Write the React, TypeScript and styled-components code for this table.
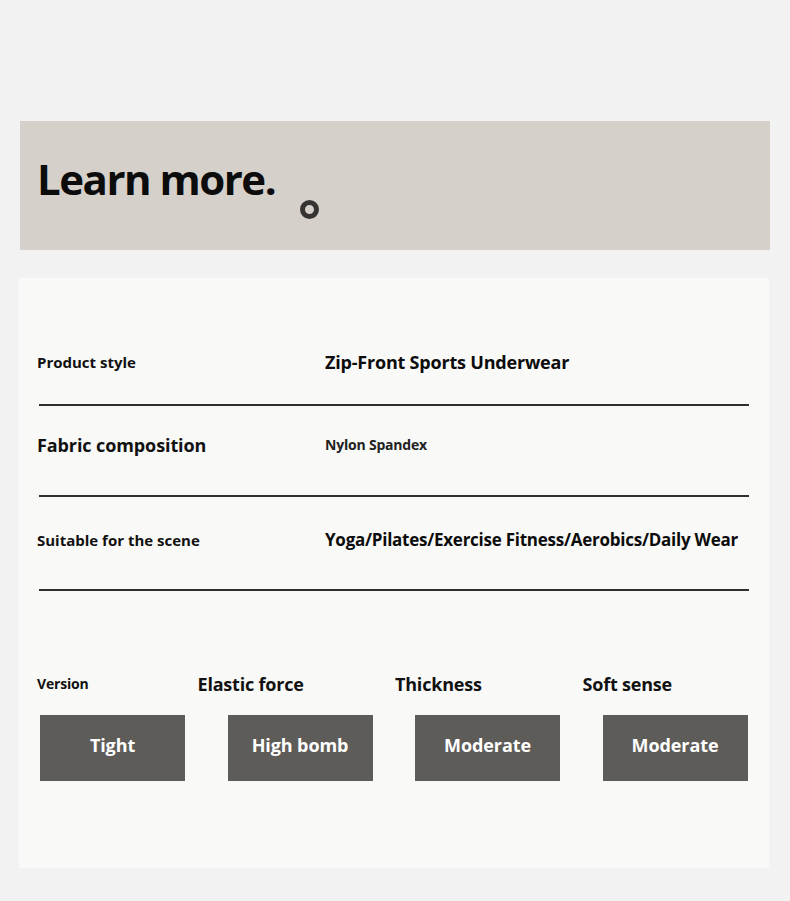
import styled, { createGlobalStyle } from "styled-components";

const GlobalStyle = createGlobalStyle`
  html, body {
    margin: 0;
    padding: 0;
    background: #f2f2f2;
  }
  body {
    font-family: "Open Sans", "Liberation Sans", sans-serif;
    color: #111;
  }
`;

const Page = styled.div`
  width: 790px;
  height: 901px;
  padding-top: 121px;
  box-sizing: border-box;
  overflow: hidden;
`;

const Banner = styled.section`
  margin-left: 20px;
  width: 750px;
  height: 129px;
  background: #d6d0cb;
  display: flex;
  align-items: flex-start;
  box-sizing: border-box;
  padding: 31px 0 0 17px;
`;

const Title = styled.h1`
  margin: 0;
  font-size: 42px;
  line-height: 54px;
  font-weight: 700;
  color: #0c0c0c;
  letter-spacing: -1.5px;
`;

const Ring = styled.span`
  display: block;
  width: 19px;
  height: 19px;
  box-sizing: border-box;
  border: 5px solid #363432;
  border-radius: 50%;
  margin: 48px 0 0 25px;
`;

const Card = styled.section`
  margin: 28px 0 0 19px;
  width: 750px;
  height: 590px;
  background: #f9f9f7;
  box-sizing: border-box;
  padding: 72px 20px 0;
`;

const Row = styled.div<{ $top: number; $bottom: number }>`
  display: grid;
  grid-template-columns: 286px 1fr;
  align-items: center;
  padding: ${(p) => p.$top}px 0 ${(p) => p.$bottom}px;
  border-bottom: 2px solid #2f2f2f;
`;

const Label = styled.div<{ $size: number; $spacing?: number }>`
  font-size: ${(p) => p.$size}px;
  line-height: 24px;
  font-weight: 700;
  margin-left: -2px;
  letter-spacing: ${(p) => p.$spacing ?? 0}px;
  white-space: nowrap;
`;

const Value = styled.div<{ $size: number; $spacing?: number; $soft?: boolean }>`
  font-size: ${(p) => p.$size}px;
  line-height: 24px;
  font-weight: 700;
  color: ${(p) => (p.$soft ? "#222" : "#0c0c0c")};
  letter-spacing: ${(p) => p.$spacing ?? -0.2}px;
  white-space: nowrap;
`;

const Specs = styled.div`
  display: grid;
  grid-template-columns: repeat(4, 145px);
  column-gap: 42.5px;
  row-gap: 19px;
  margin: 81px 0 0 1px;
`;

const SpecLabel = styled.div<{ $shift: number; $size: number }>`
  margin-left: ${(p) => p.$shift}px;
  font-size: ${(p) => p.$size}px;
  line-height: 24px;
  font-weight: 700;
  white-space: nowrap;
  letter-spacing: -0.2px;
`;

const SpecBox = styled.div`
  height: 66px;
  background: #5e5c58;
  color: #fff;
  display: flex;
  align-items: center;
  justify-content: center;
  font-size: 18px;
  font-weight: 700;
  letter-spacing: -0.1px;
  padding: 0 0 6px;
  box-sizing: border-box;
`;

const specs = [
  { label: "Version", shift: -3, size: 14, value: "Tight" },
  { label: "Elastic force", shift: -30, size: 18, value: "High bomb" },
  { label: "Thickness", shift: -20, size: 18, value: "Moderate" },
  { label: "Soft sense", shift: -20, size: 18, value: "Moderate" },
];

export default function App() {
  return (
    <Page>
      <GlobalStyle />
      <Banner>
        <Title>Learn more.</Title>
        <Ring />
      </Banner>
      <Card>
        <Row $top={0} $bottom={30}>
          <Label $size={15}>Product style</Label>
          <Value $size={18}>Zip-Front Sports Underwear</Value>
        </Row>
        <Row $top={27} $bottom={38}>
          <Label $size={18} $spacing={-0.1}>
            Fabric composition
          </Label>
          <Value $size={14} $soft>
            Nylon Spandex
          </Value>
        </Row>
        <Row $top={31} $bottom={37}>
          <Label $size={15}>Suitable for the scene</Label>
          <Value $size={17} $spacing={-0.25}>
            Yoga/Pilates/Exercise Fitness/Aerobics/Daily Wear
          </Value>
        </Row>
        <Specs>
          {specs.map((s) => (
            <SpecLabel key={s.label} $shift={s.shift} $size={s.size}>
              {s.label}
            </SpecLabel>
          ))}
          {specs.map((s, i) => (
            <SpecBox key={i}>{s.value}</SpecBox>
          ))}
        </Specs>
      </Card>
    </Page>
  );
}
